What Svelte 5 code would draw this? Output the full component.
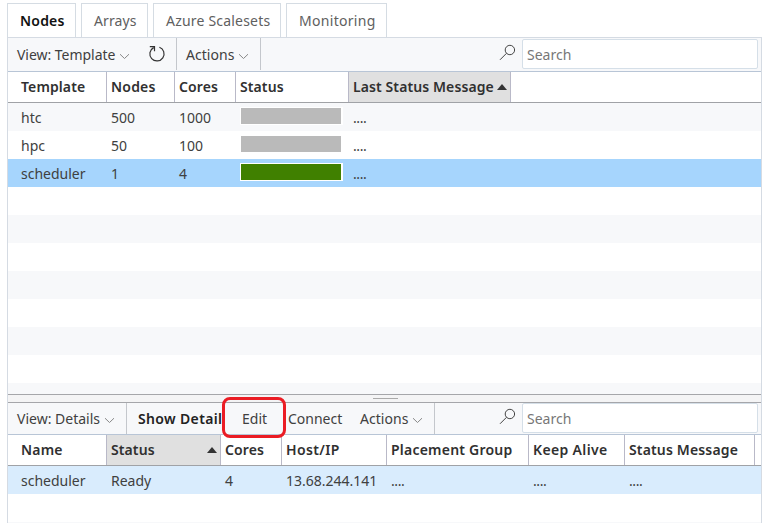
<script>
  const tabs = [
    { label: 'Nodes', width: 69, pad: 12, ls: 0.2 },
    { label: 'Arrays', width: 67, pad: 12, ls: 0.1 },
    { label: 'Azure Scalesets', width: 128, pad: 12, ls: 0.2 },
    { label: 'Monitoring', width: 101, pad: 12, ls: 0.3 }
  ];
  const templateCols = [
    { label: 'Template', width: 99, pad: 13, ls: 0.1 },
    { label: 'Nodes', width: 68, pad: 4, ls: 0.2 },
    { label: 'Cores', width: 61, pad: 4, ls: 0.1 },
    { label: 'Status', width: 113, pad: 4, ls: 0.1 },
    { label: 'Last Status Message', width: 162, pad: 4, sorted: true, ls: 0.1 }
  ];
  const templates = [
    { name: 'htc', nodes: '500', cores: '1000', state: 'off' },
    { name: 'hpc', nodes: '50', cores: '100', state: 'off' },
    { name: 'scheduler', nodes: '1', cores: '4', state: 'ready', selected: true }
  ];
  const nodeCols = [
    { label: 'Name', value: 'scheduler', width: 99, pad: 13, ls: 0.2 },
    { label: 'Status', value: 'Ready', width: 114, pad: 4, sorted: true, ls: 0.1 },
    { label: 'Cores', value: '4', width: 61, pad: 4, ls: 0.1 },
    { label: 'Host/IP', value: '13.68.244.141', width: 105, pad: 4, ls: 0.35 },
    { label: 'Placement Group', value: '....', width: 142, pad: 4, ls: 0.22 },
    { label: 'Keep Alive', value: '....', width: 96, pad: 4, ls: 0.35 },
    { label: 'Status Message', value: '....', width: 130, pad: 4, ls: 0.15 }
  ];
</script>

{#snippet chevron()}
  <svg class="chevron" width="11" height="7" viewBox="0 0 11 7"><path d="M1 1.2 5.5 5.5 10 1.2" /></svg>
{/snippet}

{#snippet search()}
  <div class="search">
    <svg width="17" height="17" viewBox="0 0 17 17"><circle cx="10.9" cy="6" r="4.7" /><path d="M7.5 9.3 1 15.8" /></svg>
    <input type="text" placeholder="Search" />
  </div>
{/snippet}

{#snippet header(cols)}
  <div class="header">
    {#each cols as c}
      <div class="th" class:sorted={c.sorted} style="width:{c.width}px;padding-left:{c.pad}px">
        <span style="letter-spacing:{c.ls}px">{c.label}</span>
        {#if c.sorted}<svg class="sort" width="10" height="6" viewBox="0 0 10 6"><path d="M0 6 5 0l5 6z" /></svg>{/if}
      </div>
    {/each}
  </div>
{/snippet}

<div class="app">
  <nav class="tabs">
    {#each tabs as t, i}
      <div class="tab" class:active={i === 0} style="width:{t.width}px;padding-left:{t.pad}px">
        <span style="letter-spacing:{t.ls}px">{t.label}</span>
      </div>
    {/each}
  </nav>
  <main>
    <div class="toolbar top">
      <div class="group view"><span class="vt">View: Template</span>{@render chevron()}
        <svg class="reload" width="18" height="18" viewBox="0 0 18 18"><path d="M11.4 2.2A7.1 7.1 0 1 1 5.6 2.6M1.8 1.6H6.5V6.2" /></svg>
      </div>
      <div class="group actions"><span class="act">Actions</span>{@render chevron()}</div>
      {@render search()}
    </div>
    {@render header(templateCols)}
    <section class="templates">
      {#each templates as r}
        <div class="row" class:selected={r.selected}>
          <div class="td" style="width:99px;padding-left:13px">{r.name}</div>
          <div class="td" style="width:68px">{r.nodes}</div>
          <div class="td" style="width:61px">{r.cores}</div>
          <div class="td status" style="width:113px"><div class="bar"><div class={r.state}></div></div></div>
          <div class="td dots">....</div>
        </div>
      {/each}
    </section>
    <div class="splitter"><i></i></div>
    <div class="toolbar bottom">
      <div class="group details"><span class="vd">View: Details</span>{@render chevron()}</div>
      <div class="group commands">
        <b class="show">Show Detail</b>
        <span class="edit">Edit<em></em></span>
        <span class="connect">Connect</span>
        <span class="act">Actions</span>{@render chevron()}
      </div>
      {@render search()}
    </div>
    {@render header(nodeCols)}
    <section class="nodes">
      <div class="row current">
        {#each nodeCols as c}
          <div class="td" class:dots={c.value === '....'} style="width:{c.width}px;padding-left:{c.pad}px">{c.value}</div>
        {/each}
      </div>
    </section>
  </main>
</div>

<style>
  :global(body) { background: #fff; overflow: hidden; }
  * { box-sizing: border-box; }
  .app { width: 772px; height: 523px; padding: 3px 10px 0 7px; overflow: hidden; display: flex; flex-direction: column; font: 14px/20px "Noto Sans", "Open Sans", sans-serif; color: #404040; white-space: nowrap; }
  svg { fill: none; stroke: #444; stroke-width: 1; flex: none; }
  .tabs { display: flex; gap: 5px; height: 34px; flex: none; }
  .tab { border: 1px solid #d5dce3; border-bottom: 0; padding-top: 7px; color: #606060; }
  .tab.active { color: #111; font-weight: 600; }
  main { width: 755px; height: 486px; border: 1px solid #d5dbe3; border-bottom: 0; display: flex; flex-direction: column; }
  .toolbar { display: flex; flex: none; background: #f7f8fa; border-bottom: 1px solid #b8c5d6; }
  .top { height: 34px; }
  .bottom { height: 32px; }
  .group { display: flex; align-items: center; border-right: 1px solid #c4c7cc; padding-left: 9px; }
  .top .group { height: 32px; padding-top: 2px; }
  .chevron { margin: 3px 0 0 2px; stroke: #888; }
  .view { width: 169px; }
  .vt { width: 100px; letter-spacing: -.03px; }
  .reload { margin: -3px 0 0 18px; stroke: #333; stroke-width: 1.2; }
  .actions { width: 84px; }
  .act { width: 50px; letter-spacing: .05px; }
  .details { width: 119px; }
  .vd { width: 85px; }
  .commands { width: 308px; padding-left: 11px; }
  .show { width: 84px; overflow: hidden; font-weight: 600; color: #222; letter-spacing: .35px; }
  .edit { width: 26px; margin-left: 20px; position: relative; }
  .edit em { position: absolute; left: -20px; top: -12px; width: 64px; height: 41px; border: 3px solid #eb1c24; border-radius: 8px; z-index: 2; }
  .connect { width: 55px; margin: 0 17px 0 20px; }
  .search { display: flex; margin-left: auto; padding-right: 3px; }
  .search svg { margin: 6px 6px 0 0; }
  input { width: 236px; height: 30px; margin-top: 1px; border: 1px solid #d5dfe8; border-radius: 2px; padding: 0 0 0 4px; font: inherit; background: #fff; outline: 0; }
  .bottom input { margin-top: 0; }
  .bottom .search svg { margin-top: 5px; }
  input::placeholder { color: #777; opacity: 1; }
  .header { display: flex; flex: none; height: 31px; border-bottom: 1px solid #a0a2a6; font-weight: 600; color: #303030; }
  .th { display: flex; align-items: center; border-right: 1px solid #b9b9c8; }
  .sorted { background: #e0e0e0; }
  .sort { fill: #333; stroke: none; margin: 0 3px 0 auto; }
  section { flex: none; overflow: hidden; background: repeating-linear-gradient(#f7f8fa 0 28px, #fff 28px 56px); }
  .templates { height: 291px; }
  .nodes { height: 57px; }
  .row { display: flex; height: 28px; }
  .selected { background: #a6d5fd; }
  .current { background: #d9ecfd; }
  .td { padding: 5px 0 0 4px; }
  .dots { letter-spacing: -.4px; }
  .status { padding: 4px 0 0 4px; }
  .bar { width: 103px; height: 18px; background: #fff; padding: 1px 2px 1px 1px; }
  .bar div { height: 16px; }
  .off { background: #bababa; }
  .ready { background: #408000; }
  .splitter { flex: none; height: 9px; border: 1px solid #a5a6aa; border-width: 1px 0; background: #f4f4f5; display: flex; }
  .splitter i { width: 25px; height: 1px; background: #aaa; margin: 3px 0 0 365px; }
</style>
